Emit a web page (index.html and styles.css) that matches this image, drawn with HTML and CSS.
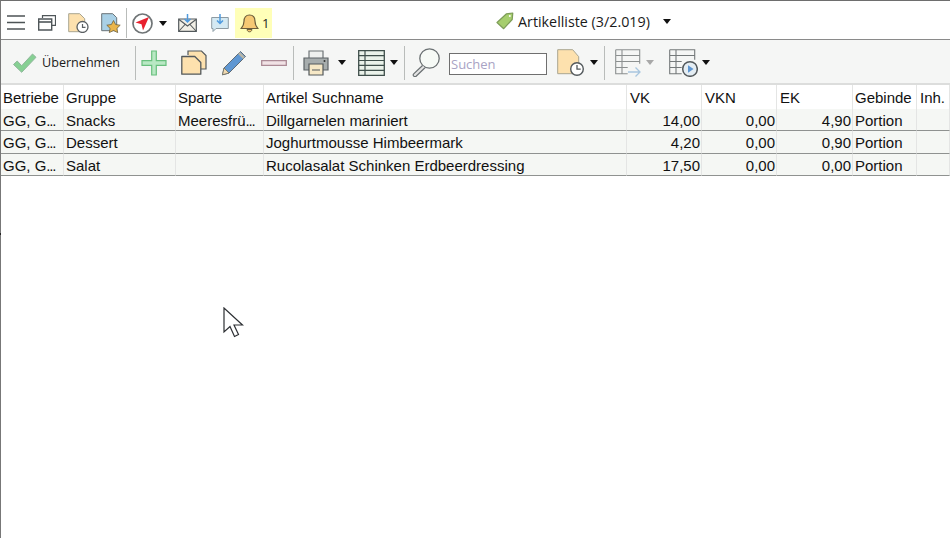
FILE: index.html
```html
<!DOCTYPE html>
<html lang="de">
<head>
<meta charset="utf-8">
<title>Artikelliste</title>
<link rel="stylesheet" href="styles.css">
</head>
<body>
<div class="app">
  <header class="topbar">
    <svg class="ic hamburger" width="18" height="15" viewBox="0 0 18 15"><path d="M0 1h18M0 7.500h18M0 14h18" stroke="#4d5356" stroke-width="1.300" fill="none"/></svg>
    <svg class="ic windows" width="18" height="16" viewBox="0 0 18 16"><path d="M4.500 3V.7h13v9.600H14" fill="none" stroke="#4f5659" stroke-width="1.200"/><path d="M.7 4h13v11H.7z" fill="#fff" stroke="#4f5659" stroke-width="1.400"/><path d="M1 7h12" stroke="#4f5659" stroke-width="1.600"/></svg>
    <svg class="ic doc1" width="21" height="20" viewBox="0 0 21 20"><path d="M.7.700h11l5 5v13H.7z" fill="#fde1ae" stroke="#a9a590" stroke-width="1"/><circle cx="14.500" cy="14" r="5.500" fill="#fff" stroke="#5b6063" stroke-width="1.300"/><path d="M14.500 11v3.300h3" fill="none" stroke="#5b6063" stroke-width="1.200"/></svg>
    <svg class="ic doc2" width="20" height="20" viewBox="0 0 20 20"><path d="M.7.700h11l4 4v13H.7z" fill="#a9d0e6" stroke="#6a7378" stroke-width="1"/><path d="M12.500 7.500l2.100 4 4.600.7-3.300 3.200.8 4.200-4.200-2.100-4.200 2.100.8-4.200-3.300-3.200 4.600-.7z" fill="#eab54a" stroke="#6d6240" stroke-width=".8"/></svg>
    <span class="sep sep-top"></span>
    <svg class="ic compass" width="21" height="21" viewBox="0 0 21 21"><circle cx="10.500" cy="10.500" r="9.500" fill="#fff" stroke="#6f7476" stroke-width="1.700"/><path d="M17 4L11 17.500l-1.500-6.200L3.500 9.500z" fill="#e8202e"/></svg>
    <span class="caret caret-compass"></span>
    <svg class="ic mail" width="19" height="18" viewBox="0 0 19 18"><path d="M.7 5h17.600v12.300H.7z" fill="#f2efe6" stroke="#53595c" stroke-width="1.200"/><path d="M1 5.500l8.500 6.500L18 5.500M1 17l6-6.500M18 17l-6-6.500" fill="none" stroke="#53595c" stroke-width="1.100"/><path d="M9.500 0v8M6.500 5l3 3 3-3" fill="none" stroke="#4f9ade" stroke-width="1.500"/></svg>
    <svg class="ic chat" width="18" height="18" viewBox="0 0 18 18"><path d="M.7 3.500h16.600v11H5l-3 3v-3H.7z" fill="#d4e9f3" stroke="#8d9ba3" stroke-width="1"/><path d="M9 0v9.500M6 6.500l3 3 3-3" fill="none" stroke="#4f9ade" stroke-width="1.500"/></svg>
    <div class="bell-box">
      <svg class="ic" width="19" height="19" viewBox="0 0 19 19"><path d="M9.500 1c3.700 0 5.500 2.800 5.500 6.200 0 3.800 1.200 5.400 2.800 7.300H1.200C2.800 12.600 4 11 4 7.200 4 3.800 5.800 1 9.500 1z" fill="#f6c973" stroke="#6b5e3b" stroke-width="1.200"/><path d="M7 15.500c.3 1.500 1.200 2.300 2.500 2.300s2.200-.8 2.500-2.300z" fill="#f6c973" stroke="#6b5e3b" stroke-width="1"/></svg>
      <span class="bell-count">1</span>
    </div>
    <div class="title">
      <svg class="ic" width="18" height="18" viewBox="0 0 18 18"><path d="M1 10.500L10.500 1.800l6.300-.8-.6 6.500-8.500 9.200z" fill="#a6ce6e" stroke="#7d9c58" stroke-width="1.200" stroke-linejoin="round"/><circle cx="13.800" cy="4" r="1" fill="#fff"/></svg>
      <span class="title-text">Artikelliste (3/2.019)</span>
      <span class="caret caret-title"></span>
    </div>
  </header>
  <nav class="toolbar">
    <svg class="ic check" width="25" height="20" viewBox="0 0 25 20"><path d="M1.500 11.500l3.700-3.500 4.500 4.700L20.500 1l3.500 3.300-14.300 15z" fill="#86d093" stroke="#8fb69a" stroke-width="1"/></svg>
    <span class="apply">Übernehmen</span>
    <span class="sep sep-a"></span>
    <svg class="ic plus" width="26" height="26" viewBox="0 0 26 26"><path d="M10.700 1h4.600v9.700H25v4.600h-9.700V25h-4.600v-9.700H1v-4.600h9.700z" fill="#b9e8c4" stroke="#69bf7e" stroke-width="1.200"/></svg>
    <svg class="ic copy" width="26" height="25" viewBox="0 0 26 25"><path d="M7 5V1h13.500L25 5.500V19h-5" fill="#fde1ae" stroke="#53595c" stroke-width="1.200"/><path d="M.8 6.500h13l6 6v11.700h-19z" fill="#fde1ae" stroke="#53595c" stroke-width="1.300" stroke-linejoin="round"/></svg>
    <svg class="ic pencil" width="26" height="26" viewBox="0 0 26 26"><path d="M19.500 1.500l5 5L8 23l-6.500 1.800L3 18z" fill="#5f97d2" stroke="#5f6b75" stroke-width="1"/><path d="M18 3l5 5" stroke="#b9b6a8" stroke-width="2.500"/><path d="M3 18l5 5-6.500 1.800z" fill="#f0d9b0" stroke="#6d6d60" stroke-width=".8"/></svg>
    <svg class="ic minus" width="26" height="6" viewBox="0 0 26 6"><path d="M.7.700h24.600v4.600H.7z" fill="#f1e2e5" stroke="#ac8b96" stroke-width="1.300"/></svg>
    <span class="sep sep-b"></span>
    <svg class="ic printer" width="26" height="26" viewBox="0 0 26 26"><path d="M6 8V1h14v7" fill="#eef0ee" stroke="#6f7577" stroke-width="1.200"/><path d="M1 8h24v12H1z" fill="#a7adad" stroke="#5d6366" stroke-width="1.200"/><path d="M6 14h14v11H6z" fill="#f6e8c6" stroke="#53595c" stroke-width="1.200"/><path d="M9 20h8" stroke="#53595c"/><circle cx="21.500" cy="11" r="1" fill="#333"/></svg>
    <span class="caret caret-print"></span>
    <svg class="ic grid" width="27" height="26" viewBox="0 0 27 26"><path d="M.7.700h25.600v24.600H.7z" fill="#eaf2ea" stroke="#3f4f4b" stroke-width="1.300"/><path d="M.7 5.600h25.600M.7 10.500h25.600M.7 15.400h25.600M.7 20.300h25.600M7 .7v24.600" stroke="#3f4f4b" stroke-width="1.200" fill="none"/></svg>
    <span class="caret caret-grid"></span>
    <span class="sep sep-c"></span>
    <svg class="ic lens" width="28" height="29" viewBox="0 0 28 29"><circle cx="17.500" cy="10.500" r="9.700" fill="#f6faf6" stroke="#6a7072" stroke-width="1.300"/><path d="M10.500 17.500l-8.800 8.300a1.700 1.700 0 0 0 2.400 2.400l8.900-8.400" fill="#e3e3e3" stroke="#6a7072" stroke-width="1.200"/></svg>
    <input class="search" type="text" placeholder="Suchen">
    <svg class="ic doc3" width="27" height="27" viewBox="0 0 27 27"><path d="M.7.700h15l6 7v17H.7z" fill="#fde1ae" stroke="#a9a590" stroke-width="1"/><circle cx="20" cy="20" r="6.300" fill="#fff" stroke="#53595c" stroke-width="1.400"/><path d="M20 16v4.200h3.700" fill="none" stroke="#53595c" stroke-width="1.300"/></svg>
    <span class="caret caret-doc"></span>
    <span class="sep sep-d"></span>
    <svg class="ic export" width="26" height="28" viewBox="0 0 26 28"><path d="M.7.700h24v14M.7.700v24h12M.7 6.500h24M.7 12.500h24M.7 18.500h12M7 .7v24" fill="none" stroke="#8c9090" stroke-width="1.100"/><path d="M13 23h12M20.500 18.500l4.500 4.500-4.500 4.500" fill="none" stroke="#a9c6df" stroke-width="1.300"/></svg>
    <span class="caret caret-export"></span>
    <svg class="ic playlist" width="29" height="28" viewBox="0 0 29 28"><path d="M.7.700h25v10M.7.700v24h12M.7 6.500h25M.7 12.500h12M.7 18.500h12M7 .7v24" fill="none" stroke="#74797a" stroke-width="1.100"/><circle cx="21" cy="20" r="7.300" fill="#e4edf3" stroke="#53595c" stroke-width="1.500"/><path d="M19 16.300l5.500 3.700-5.500 3.700z" fill="#5f97d2"/></svg>
    <span class="caret caret-playlist"></span>
  </nav>
  <table class="grid-table">
    <colgroup>
      <col class="c1"><col class="c2"><col class="c3"><col class="c4"><col class="c5"><col class="c6"><col class="c7"><col class="c8"><col class="c9">
    </colgroup>
    <thead>
      <tr><th>Betriebe</th><th>Gruppe</th><th>Sparte</th><th>Artikel Suchname</th><th class="inset">VK</th><th class="inset">VKN</th><th class="inset">EK</th><th>Gebinde</th><th class="inset">Inh.</th></tr>
    </thead>
    <tbody>
      <tr class="row-short"><td>GG, G<span class="dots">...</span></td><td>Snacks</td><td>Meeresfrü<span class="dots">...</span></td><td>Dillgarnelen mariniert</td><td class="num">14,00</td><td class="num">0,00</td><td class="num">4,90</td><td>Portion</td><td></td></tr>
      <tr><td>GG, G<span class="dots">...</span></td><td>Dessert</td><td></td><td>Joghurtmousse Himbeermark</td><td class="num">4,20</td><td class="num">0,00</td><td class="num">0,90</td><td>Portion</td><td></td></tr>
      <tr class="row-short"><td>GG, G<span class="dots">...</span></td><td>Salat</td><td></td><td>Rucolasalat Schinken Erdbeerdressing</td><td class="num">17,50</td><td class="num">0,00</td><td class="num">0,00</td><td>Portion</td><td></td></tr>
    </tbody>
  </table>
</div>
<svg class="cursor" width="21" height="31" viewBox="0 0 21 31"><path d="M1 1v24l6-5.500 4.500 10 4-2-4.500-9.500h8.500z" fill="#fff" stroke="#2c2f33" stroke-width="1.200"/></svg>
<span class="edge-tick"></span>
</body>
</html>
```
FILE: styles.css
```css
* { box-sizing: border-box; }
html, body { margin: 0; padding: 0; height: 100%; background: #fff; overflow: hidden; }
body { position: relative; font-family: "Liberation Sans", Arial, sans-serif; color: #111; }
.app { width: 950px; height: 538px; border-top: 1px solid #6e6e6e; border-left: 1px solid #777; }
.ic { display: block; flex: none; }

.topbar { height: 39px; display: flex; align-items: center; padding-top: 6px; background: #fff; border-bottom: 1px solid #8a8a8a; }
.toolbar { height: 45px; display: flex; align-items: center; padding-top: 2px; background: #f5f6f5; border-bottom: 2px solid #dcdddc; }

.sep { flex: none; width: 1px; background: #b9bcba; }
.sep-top { height: 30px; margin-left: 5px; }
.sep-a, .sep-b, .sep-c, .sep-d { height: 34px; }

.caret { flex: none; width: 0; height: 0; border-left: 4.5px solid transparent; border-right: 4.5px solid transparent; border-top: 5px solid #111; }

.hamburger { margin: -2px 0 0 6px; }
.windows { margin-left: 13px; }
.doc1 { margin-left: 12px; }
.doc2 { margin-left: 12px; }
.compass { margin-left: 5px; }
.caret-compass { margin-left: 6px; }
.mail { margin-left: 11px; }
.chat { margin-left: 14px; }
.bell-box { height: 30px; width: 37px; margin-left: 6px; background: #ffffb8; display: flex; align-items: center; padding-left: 5px; }
.bell-count { font: 13px "Open Sans", sans-serif; margin-left: 3px; color: #222; }
.title { display: flex; align-items: center; margin-left: 224px; margin-top: -4px; }
.title-text { font: 14.3px "Open Sans", sans-serif; margin-left: 4px; color: #1a1a1a; white-space: nowrap; }
.caret-title { margin-left: 13px; }

.check { margin-left: 11px; }
.apply { font: 12.6px "Open Sans", sans-serif; margin-left: 5px; color: #1a1a1a; width: 79px; white-space: nowrap; }
.sep-a { margin-left: 14px; }
.plus { margin-left: 5px; }
.copy { margin-left: 14px; }
.pencil { margin-left: 14px; }
.minus { margin-left: 14px; }
.sep-b { margin-left: 6px; }
.printer { margin-left: 9px; }
.caret-print { margin-left: 9px; }
.grid { margin-left: 12px; }
.caret-grid { margin-left: 5px; }
.sep-c { margin-left: 6px; }
.lens { margin-left: 7px; }
.search { width: 98px; height: 22px; margin: 3px 0 0 9px; border: 1px solid #6f6f6f; background: #fff; padding: 0 1px; font: 13px "Open Sans", sans-serif; }
.search::placeholder { color: #a9a3c4; opacity: 1; }
.doc3 { margin-left: 10px; }
.caret-doc { margin-left: 6px; }
.sep-d { margin-left: 6px; }
.export { margin-left: 10px; }
.caret-export { margin-left: 5px; border-top-color: #a8a8a8; }
.playlist { margin-left: 15px; }
.caret-playlist { margin-left: 4px; }

.grid-table { border-collapse: separate; border-spacing: 0; table-layout: fixed; width: 949px; font-size: 15px; }
.c1 { width: 63px; } .c2 { width: 112px; } .c3 { width: 88px; } .c4 { width: 363px; }
.c5 { width: 75px; } .c6 { width: 75px; } .c7 { width: 76px; } .c8 { width: 64px; } .c9 { width: 33px; }
.grid-table th, .grid-table td { padding: 0 2px; white-space: nowrap; overflow: hidden; border-right: 1px solid #e4e5e4; line-height: 17px; }
.grid-table th { height: 24px; font-weight: 400; text-align: left; background: #fff; }
.grid-table th.inset { padding-left: 3px; }
.grid-table td { height: 23px; background: #f5f7f4; border-bottom: 1px solid #8f9290; padding-top: 1px; }
.grid-table .row-short td { height: 22px; }
.grid-table td.num { text-align: right; padding-right: 1px; }
.dots { letter-spacing: -1.2px; }

.cursor { position: absolute; left: 223px; top: 307px; }
.edge-tick { position: absolute; left: 0; top: 233px; width: 1px; height: 2px; background: #222; }
```
